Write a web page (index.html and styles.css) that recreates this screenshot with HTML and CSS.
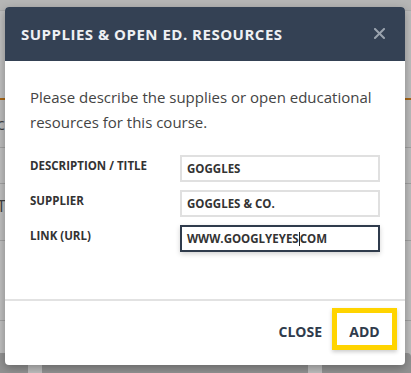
FILE: index.html
```html
<!DOCTYPE html>
<html lang="en">
<head>
<meta charset="utf-8">
<title>Supplies &amp; Open Ed. Resources</title>
<link rel="stylesheet" href="styles.css">
</head>
<body>
<div class="page">
  <div class="topbar"></div>
  <div class="row row-accent"></div>
  <div class="row row-a"><span class="ghost ghost-c">c</span></div>
  <div class="row row-b"></div>
  <div class="row row-c"><span class="ghost ghost-t">T</span></div>
  <div class="row row-d"></div>
  <div class="cards">
    <div class="card card-1"></div>
    <div class="card card-2"></div>
    <div class="card card-3"></div>
  </div>
</div>
<div class="backdrop"></div>
<div class="modal" role="dialog" aria-labelledby="modal-title">
  <div class="modal-header">
    <h2 class="modal-title" id="modal-title">SUPPLIES &amp; OPEN ED. RESOURCES</h2>
    <span class="modal-close" aria-label="Close">
      <svg width="11" height="11" viewBox="0 0 11 11"><path d="M1 1 L10 10 M10 1 L1 10" stroke="#9aa3ae" stroke-width="2" stroke-linecap="square" fill="none"/></svg>
    </span>
  </div>
  <div class="modal-body">
    <p class="intro">Please describe the supplies or open educational resources for this course.</p>
    <div class="form">
      <label class="label">DESCRIPTION / TITLE</label>
      <div class="field">GOGGLES</div>
      <label class="label">SUPPLIER</label>
      <div class="field">GOGGLES &amp; CO.</div>
      <label class="label">LINK (URL)</label>
      <div class="field field-focus">WWW.GOOGLYEYES<span class="caret"></span>COM</div>
    </div>
  </div>
  <div class="modal-footer">
    <span class="btn btn-close">CLOSE</span>
    <span class="btn btn-add">ADD</span>
  </div>
</div>
</body>
</html>
```

FILE: styles.css
```css
html, body {
  margin: 0;
  padding: 0;
}
body {
  width: 411px;
  height: 373px;
  overflow: hidden;
  position: relative;
  font-family: "Open Sans", "Liberation Sans", sans-serif;
  background: #fff;
}

/* underlying page */
.page {
  display: flex;
  flex-direction: column;
  height: 373px;
}
.topbar {
  height: 10px;
  background: #f4f4f4;
  border-bottom: 1px solid #e6e6e6;
}
.row {
  position: relative;
  border-bottom: 1px solid #d8d8d8;
}
.row-accent {
  height: 91px;
  border-bottom: 2px solid #e08a1e;
}
.row-a { height: 49px; background: #fbfbfb; }
.row-b { height: 37px; }
.row-c { height: 58px; }
.row-d { height: 83px; }
.ghost {
  position: absolute;
  left: -3px;
  font-size: 16px;
  line-height: 18px;
  color: #555;
}
.ghost-c { top: 15px; }
.ghost-t { top: 13px; }
.cards {
  display: flex;
  gap: 14px;
  padding-top: 32px;
}
.card {
  height: 20px;
  background: #c4c4c4;
  border-radius: 4px 4px 0 0;
}
.card-1 { width: 32px; margin-left: -4px; }
.card-2 { width: 266px; }
.card-3 { flex: 1; }

.backdrop {
  position: absolute;
  inset: 0;
  background: rgba(0, 0, 0, 0.255);
}

/* modal */
.modal {
  position: absolute;
  left: 5px;
  top: 7px;
  width: 400px;
  height: 358px;
  background: #fff;
  border-radius: 4px;
  overflow: hidden;
  box-shadow: 0 3px 10px rgba(0, 0, 0, 0.3);
  display: flex;
  flex-direction: column;
}
.modal-header {
  height: 54px;
  flex: none;
  background: #344154;
  display: flex;
  align-items: center;
  justify-content: space-between;
  padding: 0 20px 0 16px;
}
.modal-title {
  margin: 0;
  font-size: 15px;
  font-weight: 700;
  color: #eef0f3;
  letter-spacing: 0.5px;
}
.modal-close {
  display: flex;
  width: 11px;
  height: 11px;
  margin-top: -1px;
}
.modal-body {
  height: 240px;
  flex: none;
  padding: 24px 25px 0;
  box-sizing: border-box;
  border-bottom: 2px solid #e2e2e2;
}
.intro {
  margin: 0 0 20px;
  font-size: 15px;
  line-height: 25px;
  color: #444;
}
.form {
  display: grid;
  grid-template-columns: 150px 200px;
  grid-auto-rows: 27px;
  row-gap: 8px;
}
.label {
  font-size: 11.5px;
  font-weight: 700;
  line-height: 14px;
  padding-top: 4px;
  color: #333;
}
.field {
  box-sizing: border-box;
  height: 27px;
  border: 2px solid #e0e0e0;
  padding: 0 5px;
  display: flex;
  align-items: center;
  font-size: 11.5px;
  font-weight: 700;
  color: #333;
  white-space: nowrap;
}
.field-focus {
  border-color: #2f3b4c;
  box-shadow: 0 2px 5px rgba(0, 0, 0, 0.18);
}
.caret {
  display: inline-block;
  width: 1px;
  height: 14px;
  background: #222;
}
.modal-footer {
  flex: 1;
  display: flex;
  justify-content: flex-end;
  align-items: flex-start;
  padding: 7px 8px 0 0;
}
.btn {
  font-size: 14px;
  font-weight: 700;
  color: #2f3b4c;
  line-height: 18px;
}
.btn-close {
  margin-top: 15px;
  margin-right: 10px;
}
.btn-add {
  box-sizing: border-box;
  width: 65px;
  height: 42px;
  border: 5px solid #ffd400;
  display: flex;
  align-items: center;
  justify-content: center;
  padding-top: 5px;
  box-shadow: 0 2px 4px rgba(0, 0, 0, 0.2);
}
```
